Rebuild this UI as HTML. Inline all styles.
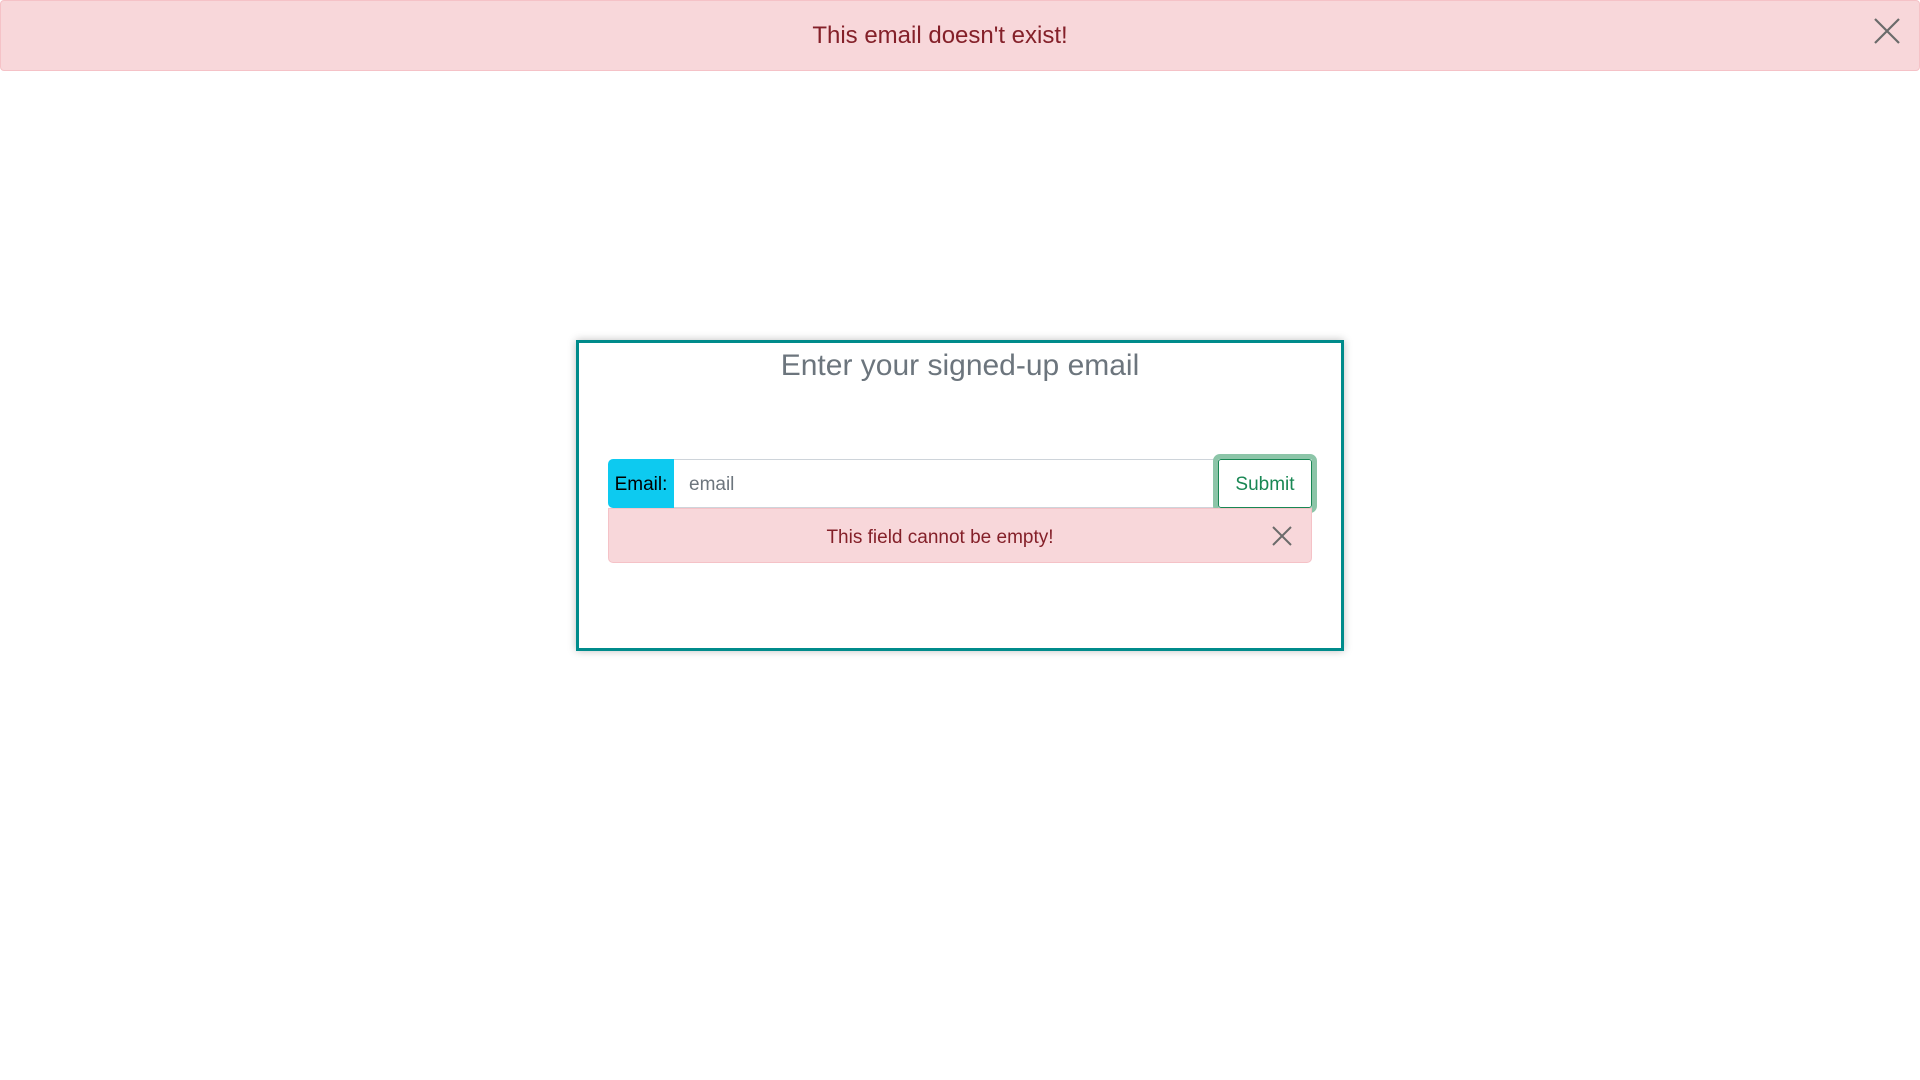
<!DOCTYPE html>
<html><head><meta charset="utf-8"><style>
*{box-sizing:border-box;margin:0;padding:0}
body{width:1920px;height:1080px;background:#fff;font-family:"Liberation Sans",sans-serif;position:relative;overflow:hidden}
.top{position:absolute;left:0;top:0;width:1920px;height:71px;background:#f8d7da;border:1px solid #f5c2c7;border-radius:4px;color:#842029;font-size:24px;text-align:center;line-height:70px;padding-right:40px}
.x{position:absolute}
.box{position:absolute;left:576px;top:340px;width:768px;height:311px;border:3px solid #008b8b;box-shadow:0 0 8px rgba(0,0,0,.25)}
.title{position:absolute;left:0;right:0;top:6px;text-align:center;font-size:30px;color:#6c757d}
.lab{position:absolute;left:608px;top:459px;width:66px;height:49px;background:#0dcaf0;border-radius:5px 0 0 5px;color:#000;font-size:19px;line-height:52px;text-align:center}
.inp{position:absolute;left:674px;top:459px;width:545px;height:49px;border:1px solid #ced4da;border-left:none;color:#6c757d;font-size:19px;line-height:50px;padding-left:15px}
.btn{position:absolute;left:1213px;top:454px;width:104px;height:59px;border:5px solid #8cc5a8;border-radius:7px}
.btn div{width:100%;height:100%;border:1px solid #198754;background:#fff;color:#198754;font-size:19px;text-align:center;line-height:50px;border-radius:3px}
.al{position:absolute;left:608px;top:508px;width:704px;height:55px;background:#f8d7da;border:1px solid #f5c2c7;border-radius:0 0 5px 5px;color:#842029;font-size:19px;text-align:center;line-height:57px;padding-right:40px}
</style></head><body>
<div class="top">This email doesn't exist!
<svg class="x" style="left:1873px;top:17px" width="26" height="26" viewBox="0 0 26 26"><path d="M1 1L25 25M25 1L1 25" stroke="#6b6b6b" stroke-width="2.2"/></svg></div>
<div class="box"><div class="title">Enter your signed-up email</div></div>
<div class="lab">Email:</div>
<div class="inp">email</div>
<div class="btn"><div>Submit</div></div>
<div class="al">This field cannot be empty!
<svg class="x" style="left:663px;top:17px" width="20" height="20" viewBox="0 0 20 20"><path d="M1 1L19 19M19 1L1 19" stroke="#6b6b6b" stroke-width="2"/></svg></div>
</body></html>
